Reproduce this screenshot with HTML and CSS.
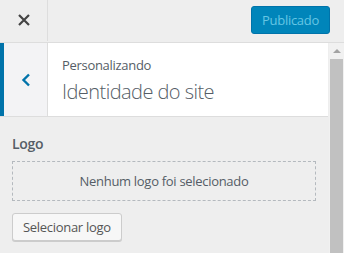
FILE: index.html
```html
<!DOCTYPE html>
<html lang="pt">
<head>
<meta charset="utf-8">
<link rel="stylesheet" href="styles.css">
</head>
<body>
<div class="header">
  <button class="close" aria-label="Fechar">
    <svg width="14" height="14" viewBox="0 0 14 14"><path d="M2 2 L12 12 M12 2 L2 12" stroke="#444" stroke-width="2.2" fill="none"/></svg>
  </button>
  <div class="header-fill"></div>
  <button class="publish">Publicado</button>
</div>
<div class="main">
  <div class="scroller">
    <div class="section-head">
      <button class="back" aria-label="Voltar">
        <svg width="12" height="14" viewBox="0 0 12 14"><path d="M9 1.5 L3.5 7 L9 12.5" stroke="#0073aa" stroke-width="2.4" fill="none"/></svg>
      </button>
      <div class="titles">
        <div class="sub">Personalizando</div>
        <div class="title">Identidade do site</div>
      </div>
    </div>
    <div class="content">
      <div class="label">Logo</div>
      <div class="placeholder">Nenhum logo foi selecionado</div>
      <button class="btn">Selecionar logo</button>
    </div>
  </div>
  <div class="scrollbar">
    <div class="arrow"></div>
    <div class="thumb"></div>
  </div>
</div>
</body>
</html>
```
FILE: styles.css
```css
* { box-sizing: border-box; }
html, body { margin: 0; height: 100%; }
body {
  background: #eee;
  font-family: "Open Sans", "Noto Sans", sans-serif;
  color: #555d66;
  overflow: hidden;
  letter-spacing: -0.3px;
}
button { font-family: inherit; letter-spacing: inherit; }
.header {
  height: 43px;
  display: flex;
  align-items: center;
  background: #eee;
  border-bottom: 1px solid #ddd;
}
.close {
  width: 48px;
  height: 42px;
  border: 0;
  border-right: 1px solid #ddd;
  background: #eee;
  display: flex;
  align-items: center;
  justify-content: center;
  padding: 0;
  margin-top: -2px;
}
.header-fill { flex: 1; }
.publish {
  width: 79px;
  height: 28px;
  margin-right: 14px;
  margin-top: -3px;
  background: #0085ba;
  border: 1px solid #0073aa;
  border-radius: 3px;
  color: #66c6e4;
  font-size: 13px;
  padding: 0;
}
.main {
  display: flex;
  height: 210px;
}
.scroller { flex: 1; min-width: 0; }
.section-head {
  display: flex;
  height: 74px;
  background: #fff;
  border-bottom: 1px solid #ddd;
  margin-right: 1px;
}
.back {
  width: 48px;
  border: 0;
  border-left: 4px solid #0073aa;
  border-right: 1px solid #ddd;
  background: #f3f3f5;
  display: flex;
  align-items: center;
  justify-content: center;
  padding: 0;
}
.titles { padding: 13px 0 0 14px; }
.sub { font-size: 13px; line-height: 18px; color: #555d66; }
.title { font-size: 20px; font-weight: 300; line-height: 28px; margin-top: 4px; color: #555d66; letter-spacing: -0.55px; }
.content { padding: 17px 13px 0 12px; }
.label { font-size: 14px; font-weight: 600; line-height: 20px; color: #555d66; }
.placeholder {
  margin-top: 7px;
  height: 40px;
  border: 1px dashed #b4b9be;
  display: flex;
  align-items: center;
  justify-content: center;
  font-size: 13px;
  color: #555d66;
}
.btn {
  margin-top: 12px;
  height: 28px;
  padding: 0 10px;
  background: #f7f7f7;
  border: 1px solid #ccc;
  border-radius: 3px;
  box-shadow: 0 1px 0 #ccc;
  font-size: 13px;
  color: #555;
}
.scrollbar {
  width: 15px;
  background: #f1f1f1;
  display: flex;
  flex-direction: column;
  align-items: center;
}
.arrow {
  margin-top: 6px;
  width: 0; height: 0;
  border-left: 4px solid transparent;
  border-right: 4px solid transparent;
  border-bottom: 4px solid #a3a3a3;
}
.thumb {
  margin-top: 6px;
  width: 13px;
  flex: 1;
  background: #c1c1c1;
}
```
